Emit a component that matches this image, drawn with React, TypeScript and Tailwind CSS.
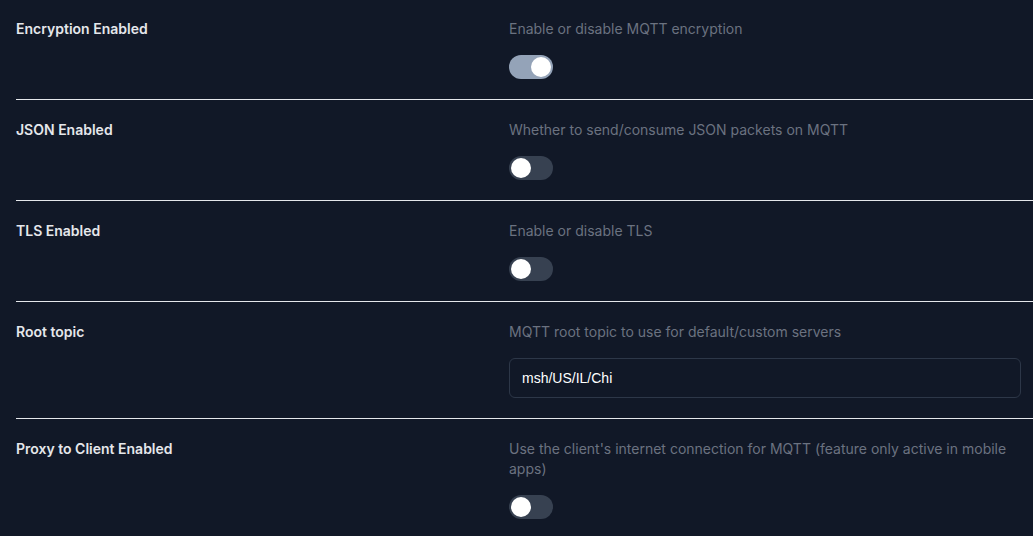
import { useState } from "react";

type Field = {
  label: string;
  description: string;
  kind: "toggle" | "text";
  value: boolean | string;
};

const fields: Field[] = [
  {
    label: "Encryption Enabled",
    description: "Enable or disable MQTT encryption",
    kind: "toggle",
    value: true,
  },
  {
    label: "JSON Enabled",
    description: "Whether to send/consume JSON packets on MQTT",
    kind: "toggle",
    value: false,
  },
  {
    label: "TLS Enabled",
    description: "Enable or disable TLS",
    kind: "toggle",
    value: false,
  },
  {
    label: "Root topic",
    description: "MQTT root topic to use for default/custom servers",
    kind: "text",
    value: "msh/US/IL/Chi",
  },
  {
    label: "Proxy to Client Enabled",
    description:
      "Use the client's internet connection for MQTT (feature only active in mobile apps)",
    kind: "toggle",
    value: false,
  },
];

function Toggle({ initial }: { initial: boolean }) {
  const [on, setOn] = useState(initial);
  return (
    <button
      type="button"
      onClick={() => setOn(!on)}
      className={`relative inline-flex h-6 w-11 shrink-0 items-center rounded-full transition-colors ${
        on ? "bg-[#94a3b8]" : "bg-[#374151]"
      }`}
    >
      <span
        className={`inline-block h-5 w-5 rounded-full bg-white transition-transform ${
          on ? "translate-x-[22px]" : "translate-x-0.5"
        }`}
      />
    </button>
  );
}

function Row({ field }: { field: Field }) {
  return (
    <div className="grid grid-cols-[493px_1fr] border-t border-[#e5e7eb] pt-5 pb-5">
      <div className="text-sm leading-5 font-semibold text-[#e5e7eb]">
        {field.label}
      </div>
      <div className="flex flex-col items-start gap-4 pr-3">
        <p className="text-sm leading-5 text-[#6b7280]">{field.description}</p>
        {field.kind === "toggle" ? (
          <Toggle initial={field.value as boolean} />
        ) : (
          <input
            defaultValue={field.value as string}
            className="h-10 w-full rounded-md border border-[#2d3748] bg-transparent px-3 font-['Liberation_Sans',Arial,sans-serif] text-sm text-white outline-none"
          />
        )}
      </div>
    </div>
  );
}

export default function App() {
  return (
    <div className="min-h-screen overflow-hidden bg-[#111827] font-['Inter',sans-serif]">
      <div className="-mt-0.5 pl-4">
        {fields.map((f) => (
          <Row key={f.label} field={f} />
        ))}
      </div>
    </div>
  );
}
